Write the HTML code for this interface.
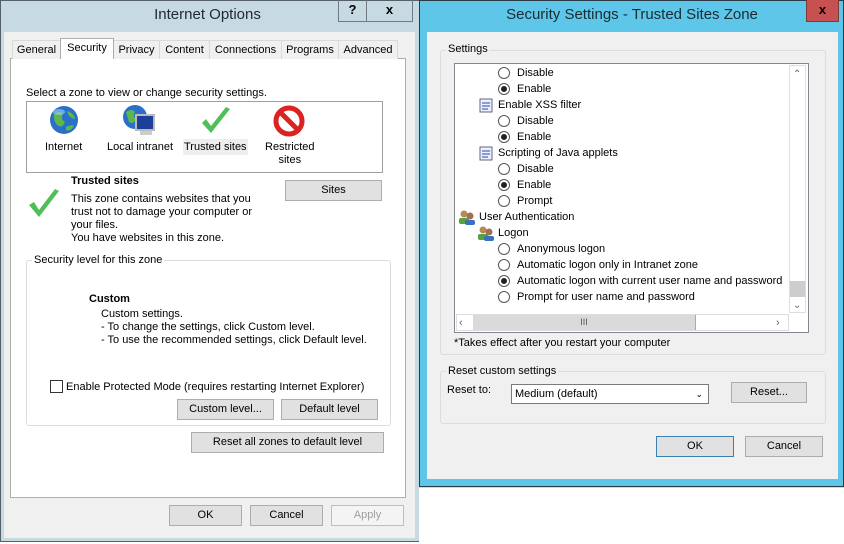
<!DOCTYPE html>
<html><head><meta charset="utf-8"><style>
*{margin:0;padding:0;box-sizing:border-box}
body{width:844px;height:544px;background:#fff;position:relative;overflow:hidden;font-family:"Liberation Sans",sans-serif;font-size:11px;line-height:16px;color:#000}
.a{position:absolute;white-space:nowrap}
.btn{position:absolute;background:#e1e1e1;border:1px solid #adadad;text-align:center;line-height:19px;font-size:11px}
.grp{position:absolute;border:1px solid #dcdcdc;border-radius:3px}
.lbl{position:absolute;background:inherit;padding:0 2px;white-space:nowrap}
.tab{position:absolute;top:40px;height:19px;border:1px solid #d9d9d9;border-bottom:none;background:#f0f0f0;text-align:center;line-height:19px}
.rad{position:absolute;width:12px;height:12px;border:1px solid #555;border-radius:50%;background:#fff}
.rad.on::after{content:"";position:absolute;left:2px;top:2px;width:6px;height:6px;border-radius:50%;background:#222}
</style></head><body>
<!-- Left window -->
<div class="a" style="left:0;top:0;width:420px;height:542px;background:#c7d9e1;border:1px solid #55606a"></div>
<div class="a" style="left:0;top:7px;width:415px;text-align:center;font-size:15px;color:#1e2a33">Internet Options</div>
<div class="a" style="left:338px;top:0;width:29px;height:22px;border:1px solid #6d7b85;border-top:none;text-align:center;font-weight:bold;font-size:13px;line-height:20px">?</div>
<div class="a" style="left:366px;top:0;width:47px;height:22px;border:1px solid #6d7b85;border-top:none;text-align:center;font-weight:bold;font-size:13px;line-height:20px">x</div>
<div class="a" style="left:4px;top:32px;width:411px;height:506px;background:#f0f0f0"></div>
<div class="a" style="left:10px;top:58px;width:396px;height:440px;background:#fff;border:1px solid #adadad"></div>
<div class="tab" style="left:12px;width:49px">General</div>
<div class="tab" style="left:60px;top:38px;height:21px;width:54px;background:#fff;border-color:#adadad;z-index:2">Security</div>
<div class="tab" style="left:113px;width:47px">Privacy</div>
<div class="tab" style="left:159px;width:51px">Content</div>
<div class="tab" style="left:209px;width:73px">Connections</div>
<div class="tab" style="left:281px;width:58px">Programs</div>
<div class="tab" style="left:338px;width:60px">Advanced</div>
<div class="a" style="left:26px;top:85px">Select a zone to view or change security settings.</div>
<div class="a" style="left:26px;top:101px;width:357px;height:72px;border:1px solid #a0a0a0"></div>
<svg class="a" style="left:48px;top:105px" width="34" height="32"><circle cx="16" cy="15" r="14" fill="#2a6fc9"/><path d="M6 9 Q12 5 15 9 Q12 14 17 17 Q14 24 9 20 Q5 15 6 9Z M19 6 Q26 8 27 14 Q22 13 20 9Z M18 22 Q24 19 26 21 Q22 27 18 25Z" fill="#5cb84a"/><ellipse cx="11" cy="7" rx="6" ry="3" fill="#9fd0ff" opacity=".6"/></svg>
<svg class="a" style="left:122px;top:104px" width="36" height="34"><circle cx="13" cy="13" r="12" fill="#2a6fc9"/><path d="M4 8 Q10 4 13 8 Q10 12 14 15 Q11 21 7 18Z" fill="#5cb84a"/><rect x="14" y="11" width="18" height="15" fill="#1c3f9a" stroke="#bbb" stroke-width="2"/><rect x="18" y="27" width="12" height="4" fill="#ccc"/></svg>
<svg class="a" style="left:199px;top:106px" width="34" height="30"><path d="M3 17 L12 27 L31 3 L27 1 L12 20 L7 13Z" fill="#4fbf5a"/></svg>
<svg class="a" style="left:273px;top:105px" width="34" height="32"><circle cx="16" cy="16" r="13" fill="#fff" stroke="#d22" stroke-width="5"/><line x1="7" y1="7" x2="25" y2="25" stroke="#d22" stroke-width="5"/></svg>
<div class="a" style="left:45px;top:139px">Internet</div>
<div class="a" style="left:107px;top:139px">Local intranet</div>
<div class="a" style="left:183px;top:139px;background:#eee;padding:0 1px">Trusted sites</div>
<div class="a" style="left:265px;top:141px;text-align:center;line-height:13px">Restricted<br>sites</div>
<div class="a" style="left:71px;top:173px;font-weight:bold">Trusted sites</div>
<svg class="a" style="left:27px;top:188px" width="34" height="31"><path d="M2 17 L12 29 L32 3 L28 1 L12 22 L7 14Z" fill="#4fbf5a"/></svg>
<div class="a" style="left:71px;top:193px;line-height:13px">This zone contains websites that you<br>trust not to damage your computer or<br>your files.<br>You have websites in this zone.</div>
<div class="btn" style="left:285px;top:180px;width:97px;height:21px">Sites</div>
<div class="grp" style="left:26px;top:260px;width:365px;height:166px"></div>
<div class="lbl" style="left:32px;top:252px;background:#fff">Security level for this zone</div>
<div class="a" style="left:89px;top:291px;font-weight:bold">Custom</div>
<div class="a" style="left:101px;top:308px;line-height:13px">Custom settings.<br>- To change the settings, click Custom level.<br>- To use the recommended settings, click Default level.</div>
<div class="a" style="left:50px;top:380px;width:13px;height:13px;border:1px solid #333;background:#fff"></div>
<div class="a" style="left:66px;top:379px">Enable Protected Mode (requires restarting Internet Explorer)</div>
<div class="btn" style="left:177px;top:399px;width:97px;height:21px">Custom level...</div>
<div class="btn" style="left:281px;top:399px;width:97px;height:21px">Default level</div>
<div class="btn" style="left:191px;top:432px;width:193px;height:21px">Reset all zones to default level</div>
<div class="btn" style="left:169px;top:505px;width:73px;height:21px">OK</div>
<div class="btn" style="left:250px;top:505px;width:73px;height:21px">Cancel</div>
<div class="btn" style="left:331px;top:505px;width:73px;height:21px;background:#f4f4f4;border-color:#bfbfbf;color:#a0a0a0">Apply</div>

<!-- Right window -->
<div class="a" style="left:419px;top:0;width:425px;height:487px;background:#5ec6e8;border:1px solid #2a3a44"></div>
<div class="a" style="left:420px;top:7px;width:424px;text-align:center;font-size:15px;color:#1b2b33">Security Settings - Trusted Sites Zone</div>
<div class="a" style="left:806px;top:0;width:33px;height:22px;background:#c75050;border:1px solid #7a3a3a;border-top:none;text-align:center;font-weight:bold;font-size:13px;line-height:20px">x</div>
<div class="a" style="left:427px;top:32px;width:411px;height:447px;background:#f0f0f0"></div>
<div class="a" style="left:419px;top:487px;width:425px;height:57px;background:#fff;border-top:1px solid #d8d8d8"></div>
<div class="grp" style="left:440px;top:50px;width:386px;height:305px"></div>
<div class="lbl" style="left:446px;top:41px;background:#f0f0f0">Settings</div>
<div class="a" style="left:454px;top:63px;width:355px;height:270px;background:#fff;border:1px solid #828790"></div>
<div class="a" style="left:789px;top:65px;width:17px;height:248px;background:#fff;border:1px solid #ddd"></div>
<div class="a" style="left:790px;top:281px;width:15px;height:16px;background:#cdcdcd"></div>
<div class="a" style="left:793px;top:67px;font-size:10px;color:#666">&#8963;</div>
<div class="a" style="left:793px;top:298px;font-size:10px;color:#666">&#8964;</div>
<div class="a" style="left:456px;top:314px;width:333px;height:17px;background:#fff;border:1px solid #ddd"></div>
<div class="a" style="left:473px;top:315px;width:223px;height:15px;background:#dadada;border-right:1px solid #aaa;text-align:center;font-size:9px;line-height:15px;color:#555">III</div>
<div class="a" style="left:459px;top:315px;color:#666">&lsaquo;</div>
<div class="a" style="left:776px;top:315px;color:#666">&rsaquo;</div>
<div class="rad" style="left:498px;top:67px"></div><div class="a" style="left:517px;top:65px">Disable</div>
<div class="rad on" style="left:498px;top:83px"></div><div class="a" style="left:517px;top:81px">Enable</div>
<svg class="a" style="left:478px;top:98px" width="16" height="15"><rect x="2" y="1" width="12" height="13" fill="#eef" stroke="#667"/><path d="M4 5h8M4 8h8M4 11h6" stroke="#2450b0"/></svg><div class="a" style="left:498px;top:97px">Enable XSS filter</div>
<div class="rad" style="left:498px;top:115px"></div><div class="a" style="left:517px;top:113px">Disable</div>
<div class="rad on" style="left:498px;top:131px"></div><div class="a" style="left:517px;top:129px">Enable</div>
<svg class="a" style="left:478px;top:146px" width="16" height="15"><rect x="2" y="1" width="12" height="13" fill="#eef" stroke="#667"/><path d="M4 5h8M4 8h8M4 11h6" stroke="#2450b0"/></svg><div class="a" style="left:498px;top:145px">Scripting of Java applets</div>
<div class="rad" style="left:498px;top:163px"></div><div class="a" style="left:517px;top:161px">Disable</div>
<div class="rad on" style="left:498px;top:179px"></div><div class="a" style="left:517px;top:177px">Enable</div>
<div class="rad" style="left:498px;top:195px"></div><div class="a" style="left:517px;top:193px">Prompt</div>
<svg class="a" style="left:458px;top:209px" width="18" height="16"><circle cx="6" cy="5" r="3.5" fill="#b58a5a"/><rect x="1" y="9" width="10" height="6" rx="2" fill="#5aa040"/><circle cx="12" cy="7" r="3.5" fill="#a07050"/><rect x="7" y="11" width="10" height="5" rx="2" fill="#3a70c0"/></svg><div class="a" style="left:479px;top:209px">User Authentication</div>
<svg class="a" style="left:477px;top:225px" width="18" height="16"><circle cx="6" cy="5" r="3.5" fill="#b58a5a"/><rect x="1" y="9" width="10" height="6" rx="2" fill="#5aa040"/><circle cx="12" cy="7" r="3.5" fill="#a07050"/><rect x="7" y="11" width="10" height="5" rx="2" fill="#3a70c0"/></svg><div class="a" style="left:498px;top:225px">Logon</div>
<div class="rad" style="left:498px;top:243px"></div><div class="a" style="left:517px;top:241px">Anonymous logon</div>
<div class="rad" style="left:498px;top:259px"></div><div class="a" style="left:517px;top:257px">Automatic logon only in Intranet zone</div>
<div class="rad on" style="left:498px;top:275px"></div><div class="a" style="left:517px;top:273px">Automatic logon with current user name and password</div>
<div class="rad" style="left:498px;top:291px"></div><div class="a" style="left:517px;top:289px">Prompt for user name and password</div>
<div class="a" style="left:454px;top:335px">*Takes effect after you restart your computer</div>
<div class="grp" style="left:440px;top:371px;width:386px;height:53px"></div>
<div class="lbl" style="left:446px;top:363px;background:#f0f0f0">Reset custom settings</div>
<div class="a" style="left:447px;top:382px">Reset to:</div>
<div class="a" style="left:511px;top:384px;width:198px;height:20px;background:#fff;border:1px solid #7a7a7a;padding-left:3px;line-height:18px">Medium (default)<span style="position:absolute;right:5px;top:0;font-size:9px">&#8964;</span></div>
<div class="btn" style="left:731px;top:382px;width:76px;height:21px">Reset...</div>
<div class="btn" style="left:656px;top:436px;width:78px;height:21px;border-color:#3c7fb1">OK</div>
<div class="btn" style="left:745px;top:436px;width:78px;height:21px">Cancel</div>
</body></html>
